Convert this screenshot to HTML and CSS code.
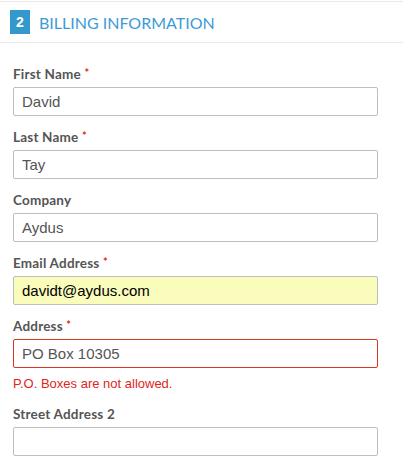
FILE: index.html
```html
<!DOCTYPE html>
<html>
<head>
<meta charset="utf-8">
<link rel="stylesheet" href="styles.css">
</head>
<body>
<div class="section-head">
  <span class="step">2</span>
  <span class="title">BILLING INFORMATION</span>
</div>
<form class="form">
  <div class="field">
    <label class="label">First Name <em class="req">*</em></label>
    <input class="input" type="text" value="David">
  </div>
  <div class="field">
    <label class="label">Last Name <em class="req">*</em></label>
    <input class="input" type="text" value="Tay">
  </div>
  <div class="field">
    <label class="label">Company</label>
    <input class="input" type="text" value="Aydus">
  </div>
  <div class="field">
    <label class="label">Email Address <em class="req">*</em></label>
    <input class="input autofill" type="text" value="davidt@aydus.com">
  </div>
  <div class="field">
    <label class="label">Address <em class="req">*</em></label>
    <input class="input input-error" type="text" value="PO Box 10305">
    <div class="error">P.O. Boxes are not allowed.</div>
  </div>
  <div class="field">
    <label class="label">Street Address 2</label>
    <input class="input" type="text" value="">
  </div>
</form>
</body>
</html>
```

FILE: styles.css
```css
html, body {
  margin: 0;
  padding: 0;
  background: #fff;
}
body {
  font-family: "Lato", "Liberation Sans", sans-serif;
}
.section-head {
  margin-top: 1px;
  border-top: 1px solid #e9e9e9;
  border-bottom: 1px solid #e9e9e9;
  height: 40px;
  display: flex;
  align-items: center;
  padding-left: 10px;
}
.step {
  width: 20px;
  height: 24px;
  background: #3399cc;
  color: #fff;
  font-family: "Liberation Sans", sans-serif;
  font-weight: bold;
  font-size: 14px;
  display: flex;
  align-items: center;
  justify-content: center;
}
.title {
  margin-left: 9px;
  color: #3d9bd6;
  font-size: 16px;
  letter-spacing: 0;
}
.form {
  padding: 21px 25px 0 13px;
}
.field {
  margin-bottom: 11px;
}
.label {
  display: block;
  height: 20px;
  line-height: 20px;
  margin-bottom: 3px;
  font-size: 13.5px;
  font-weight: bold;
  color: #555;
  letter-spacing: 0.2px;
}
.req {
  font-style: normal;
  color: #e0271a;
  font-size: 11px;
  vertical-align: top;
  line-height: 18px;
}
.input {
  display: block;
  box-sizing: border-box;
  width: 100%;
  height: 29px;
  margin: 0;
  border: 1px solid #bdbdbd;
  border-radius: 2px;
  padding: 0 8px;
  font-family: "Liberation Sans", sans-serif;
  font-size: 15px;
  color: #555;
  background: #fff;
  outline: none;
}
.input.autofill {
  background: #fafcbb;
  color: #000;
}
.form .input.input-error {
  border: 1px solid #d9361c;
}
.error {
  margin-top: 7px;
  line-height: 18px;
  font-family: "Liberation Sans", sans-serif;
  font-size: 13px;
  color: #e0261a;
}
```
